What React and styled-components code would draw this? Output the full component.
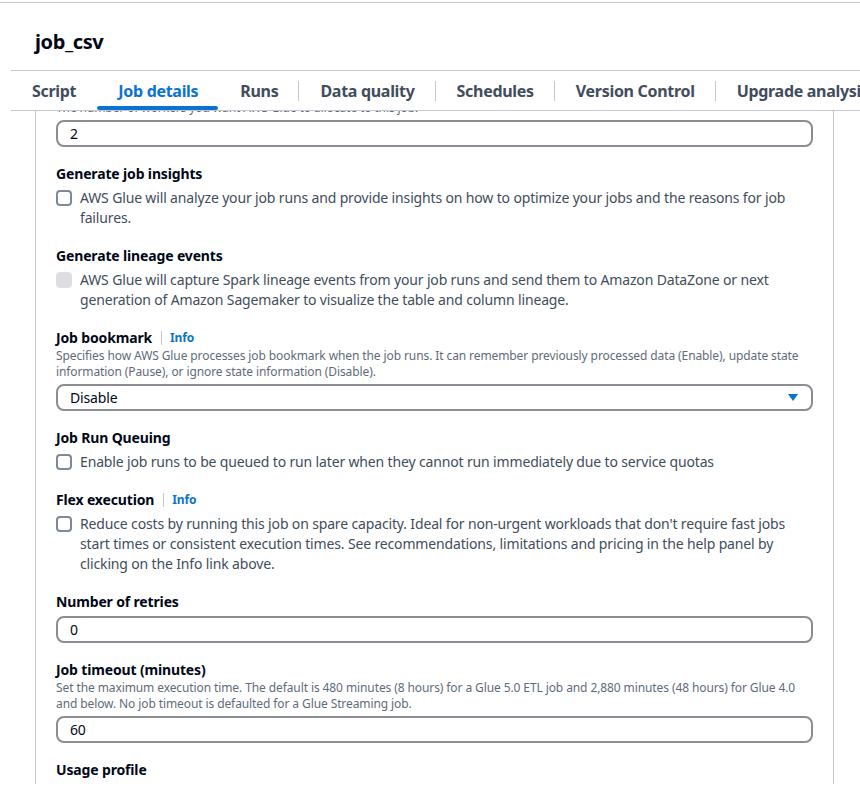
import React from 'react';
import styled, { createGlobalStyle } from 'styled-components';

const GlobalStyle = createGlobalStyle`
	body {
		margin: 0;
		font-family: "Noto Sans", "Open Sans", sans-serif;
		background: #ffffff;
		color: #000716;
	}
`;

const Page = styled.div`
	width: 860px;
	height: 805px;
	overflow: hidden;
	padding-top: 2px;
	box-sizing: border-box;
`;

const TopRule = styled.div`
	border-top: 1px solid #c6c6cd;
`;

const Header = styled.div`
	height: 67px;
	padding: 27px 0 0 35px;
	box-sizing: border-box;
`;

const Title = styled.h1`
	margin: 0;
	font-size: 20px;
	line-height: 24px;
	font-weight: 700;
	letter-spacing: -0.4px;
	color: #000716;
`;

const TabBar = styled.div`
	margin-left: 11px;
	height: 39px;
	border-top: 1px solid #c6c6cd;
	border-bottom: 1px solid #c6c6cd;
	display: flex;
	align-items: stretch;
	white-space: nowrap;
`;

const Tab = styled.div`
	position: relative;
	display: flex;
	align-items: center;
	padding: 0 20px 0 22px;
	font-size: 16px;
	font-weight: 700;
	letter-spacing: -0.3px;
	color: ${(props) => (props.active ? '#0972d3' : '#414d5c')};

	&:first-child {
		padding-left: 21px;
	}

	& + &::before {
		content: '';
		position: absolute;
		left: 0;
		top: 10px;
		height: 20px;
		border-left: 1px solid #c6c6cd;
	}

	&::after {
		content: '';
		display: ${(props) => (props.active ? 'block' : 'none')};
		position: absolute;
		left: 1px;
		right: 0;
		bottom: 0;
		height: 4px;
		border-radius: 2px;
		background: #0972d3;
	}
`;

const Panel = styled.div`
	margin-left: 35px;
	width: 799px;
	height: 673px;
	box-sizing: border-box;
	border-left: 1px solid #c6c6cd;
	border-right: 1px solid #c6c6cd;
	overflow: hidden;
`;

const Form = styled.div`
	margin-top: -11px;
	padding: 0 20px;
	display: flex;
	flex-direction: column;
	gap: 17px;
	letter-spacing: -0.15px;
`;

const Field = styled.div`
	display: flex;
	flex-direction: column;
`;

const LabelRow = styled.div`
	display: flex;
	align-items: center;
	height: 20px;
`;

const Label = styled.span`
	font-size: 14px;
	font-weight: 700;
	line-height: 20px;
	color: #000716;
`;

const Info = styled.a`
	margin-left: 9px;
	padding-left: 8px;
	border-left: 1px solid #c6c6cd;
	font-size: 12px;
	font-weight: 700;
	line-height: 14px;
	color: #0972d3;
	text-decoration: none;
`;

const Description = styled.div`
	font-size: 12px;
	line-height: 16px;
	letter-spacing: -0.1px;
	color: #5f6b7a;
`;

const Input = styled.div`
	margin-top: 4px;
	height: 27px;
	box-sizing: border-box;
	border: 2px solid #8c8c94;
	border-radius: 8px;
	padding: 0 12px;
	display: flex;
	align-items: center;
	justify-content: space-between;
	font-size: 14px;
	color: #000716;
`;

const Caret = styled.svg`
	width: 10px;
	height: 8px;
	margin-right: 1px;
`;

const CheckRow = styled.div`
	margin-top: 4px;
	padding-bottom: 1px;
	display: flex;
	align-items: flex-start;
	gap: 8px;
`;

const Box = styled.span`
	flex: none;
	width: 16px;
	height: 16px;
	margin-top: 2px;
	box-sizing: border-box;
	border-radius: 4px;
	border: 2px solid ${(props) => (props.disabled ? '#dcdde1' : '#7d8998')};
	background: ${(props) => (props.disabled ? '#dcdde1' : '#ffffff')};
`;

const CheckText = styled.span`
	font-size: 14px;
	line-height: 20px;
	color: #414d5c;
`;

const tabs = ['Script', 'Job details', 'Runs', 'Data quality', 'Schedules', 'Version Control', 'Upgrade analysis'];

const CheckField = ({ label, info, text, disabled }) => (
	<Field>
		<LabelRow>
			<Label>{label}</Label>
			{info && <Info>Info</Info>}
		</LabelRow>
		<CheckRow>
			<Box disabled={disabled} />
			<CheckText>{text}</CheckText>
		</CheckRow>
	</Field>
);

const InputField = ({ label, description, value, select }) => (
	<Field>
		{label && (
			<LabelRow>
				<Label>{label}</Label>
				{select && <Info>Info</Info>}
			</LabelRow>
		)}
		{description && <Description>{description}</Description>}
		<Input>
			<span>{value}</span>
			{select && (
				<Caret viewBox="0 0 10 8">
					<path d="M0 0 L10 0 L5 7 Z" fill="#0972d3" />
				</Caret>
			)}
		</Input>
	</Field>
);

export default function App() {
	return (
		<Page>
			<GlobalStyle />
			<TopRule />
			<Header>
				<Title>job_csv</Title>
			</Header>
			<TabBar>
				{tabs.map((t) => (
					<Tab key={t} active={t === 'Job details'}>
						{t}
					</Tab>
				))}
			</TabBar>
			<Panel>
				<Form>
					<InputField
						description="The number of workers you want AWS Glue to allocate to this job."
						value="2"
					/>
					<CheckField
						label="Generate job insights"
						text="AWS Glue will analyze your job runs and provide insights on how to optimize your jobs and the reasons for job failures."
					/>
					<CheckField
						label="Generate lineage events"
						disabled
						text="AWS Glue will capture Spark lineage events from your job runs and send them to Amazon DataZone or next generation of Amazon Sagemaker to visualize the table and column lineage."
					/>
					<InputField
						label="Job bookmark"
						select
						description="Specifies how AWS Glue processes job bookmark when the job runs. It can remember previously processed data (Enable), update state information (Pause), or ignore state information (Disable)."
						value="Disable"
					/>
					<CheckField
						label="Job Run Queuing"
						text="Enable job runs to be queued to run later when they cannot run immediately due to service quotas"
					/>
					<CheckField
						label="Flex execution"
						info
						text="Reduce costs by running this job on spare capacity. Ideal for non-urgent workloads that don't require fast jobs start times or consistent execution times. See recommendations, limitations and pricing in the help panel by clicking on the Info link above."
					/>
					<InputField label="Number of retries" value="0" />
					<InputField
						label="Job timeout (minutes)"
						description="Set the maximum execution time. The default is 480 minutes (8 hours) for a Glue 5.0 ETL job and 2,880 minutes (48 hours) for Glue 4.0 and below. No job timeout is defaulted for a Glue Streaming job."
						value="60"
					/>
					<Field>
						<LabelRow>
							<Label>Usage profile</Label>
						</LabelRow>
					</Field>
				</Form>
			</Panel>
		</Page>
	);
}
